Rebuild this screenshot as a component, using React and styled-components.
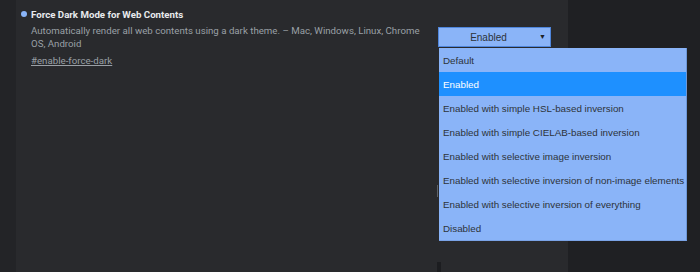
import React from 'react';
import styled, { createGlobalStyle } from 'styled-components';

const options = [
  'Default',
  'Enabled',
  'Enabled with simple HSL-based inversion',
  'Enabled with simple CIELAB-based inversion',
  'Enabled with selective image inversion',
  'Enabled with selective inversion of non-image elements',
  'Enabled with selective inversion of everything',
  'Disabled',
];

const GlobalStyle = createGlobalStyle`
  html, body {
    margin: 0;
    padding: 0;
    background: #1f2023;
    overflow: hidden;
  }
  #root {
    height: 272px;
  }
`;

function App() {
  return (
    <>
      <GlobalStyle />
      <Page>
        <SideStrip />
        <Panel>
          <Experiment>
            <Info>
              <TitleRow>
                <Dot />
                <Title>Force Dark Mode for Web Contents</Title>
              </TitleRow>
              <Description>
                Automatically render all web contents using a dark theme. – Mac, Windows, Linux, Chrome OS, Android
              </Description>
              <Permalink href="#enable-force-dark">#enable-force-dark</Permalink>
            </Info>
            <SelectWrap>
              <SelectBox>
                <span>Enabled</span>
                <Arrow>▼</Arrow>
              </SelectBox>
              <OptionList>
                {options.map((opt, i) => (
                  <Option key={opt} selected={i === 1}>
                    {opt}
                  </Option>
                ))}
              </OptionList>
              <Edge />
            </SelectWrap>
          </Experiment>
          <NextRow>
            <NextSelect />
          </NextRow>
        </Panel>
        <Backdrop />
      </Page>
    </>
  );
}

const Page = styled.div`
  display: flex;
  height: 272px;
  width: 700px;
`;

const SideStrip = styled.div`
  width: 16px;
  background: #232427;
`;

const Panel = styled.div`
  width: 552px;
  background: #292a2d;
  display: flex;
  flex-direction: column;
`;

const Backdrop = styled.div`
  flex: 1;
  background: #1f2023;
`;

const Experiment = styled.div`
  display: flex;
  padding: 7px 0 0 5px;
`;

const Info = styled.div`
  width: 410px;
  display: flex;
  flex-direction: column;
`;

const TitleRow = styled.div`
  display: flex;
  align-items: center;
  gap: 4px;
  height: 14px;
`;

const Dot = styled.span`
  flex-shrink: 0;
  width: 6px;
  height: 6px;
  border-radius: 50%;
  background: #8ab4f8;
`;

const Title = styled.h2`
  margin: 0;
  font-family: Roboto, 'Liberation Sans', sans-serif;
  font-size: 9.7px;
  font-weight: 700;
  color: #e8eaed;
  white-space: nowrap;
`;

const Description = styled.p`
  margin: 3px 0 0 10px;
  font-family: Roboto, 'Liberation Sans', sans-serif;
  font-size: 9.7px;
  line-height: 13px;
  color: #9aa0a6;
  max-width: 400px;
`;

const Permalink = styled.a`
  margin: 4px 0 0 10px;
  font-family: Roboto, 'Liberation Sans', sans-serif;
  font-size: 9.7px;
  line-height: 13px;
  color: #9aa0a6;
  text-decoration: underline;
`;

const SelectWrap = styled.div`
  position: relative;
  margin-top: 20px;
  margin-left: 7px;
`;

const SelectBox = styled.div`
  box-sizing: border-box;
  width: 113px;
  height: 20px;
  padding-right: 12px;
  display: flex;
  align-items: center;
  justify-content: center;
  position: relative;
  background: #8ab4f8;
  border: 1px solid #4f86dc;
  font-family: 'Liberation Sans', Arial, sans-serif;
  font-size: 10px;
  color: #2d3338;
`;

const Arrow = styled.span`
  position: absolute;
  right: 4px;
  top: 5px;
  font-size: 7px;
  color: #202124;
`;

const OptionList = styled.ul`
  position: absolute;
  top: 21px;
  left: 1px;
  width: 247px;
  margin: 0;
  padding: 0;
  list-style: none;
  background: #8ab4f8;
  border-right: 1px solid #6d97d8;
  border-bottom: 1px solid #7aa3e6;
  overflow: hidden;
  z-index: 2;
`;

const Option = styled.li`
  height: 24px;
  display: flex;
  align-items: center;
  padding-left: 4px;
  font-family: 'Liberation Sans', Arial, sans-serif;
  font-size: 9.8px;
  white-space: nowrap;
  overflow: hidden;
  color: ${(p) => (p.selected ? '#ffffff' : '#2d3338')};
  background: ${(p) => (p.selected ? '#1e90ff' : 'transparent')};
`;

const Edge = styled.span`
  position: absolute;
  left: -1px;
  top: 158px;
  width: 1px;
  height: 12px;
  background: #5f6368;
`;

const NextRow = styled.div`
  margin-top: auto;
  padding-left: 421px;
  height: 10px;
`;

const NextSelect = styled.div`
  width: 4px;
  height: 10px;
  background: #1c1d20;
`;

export default App;
